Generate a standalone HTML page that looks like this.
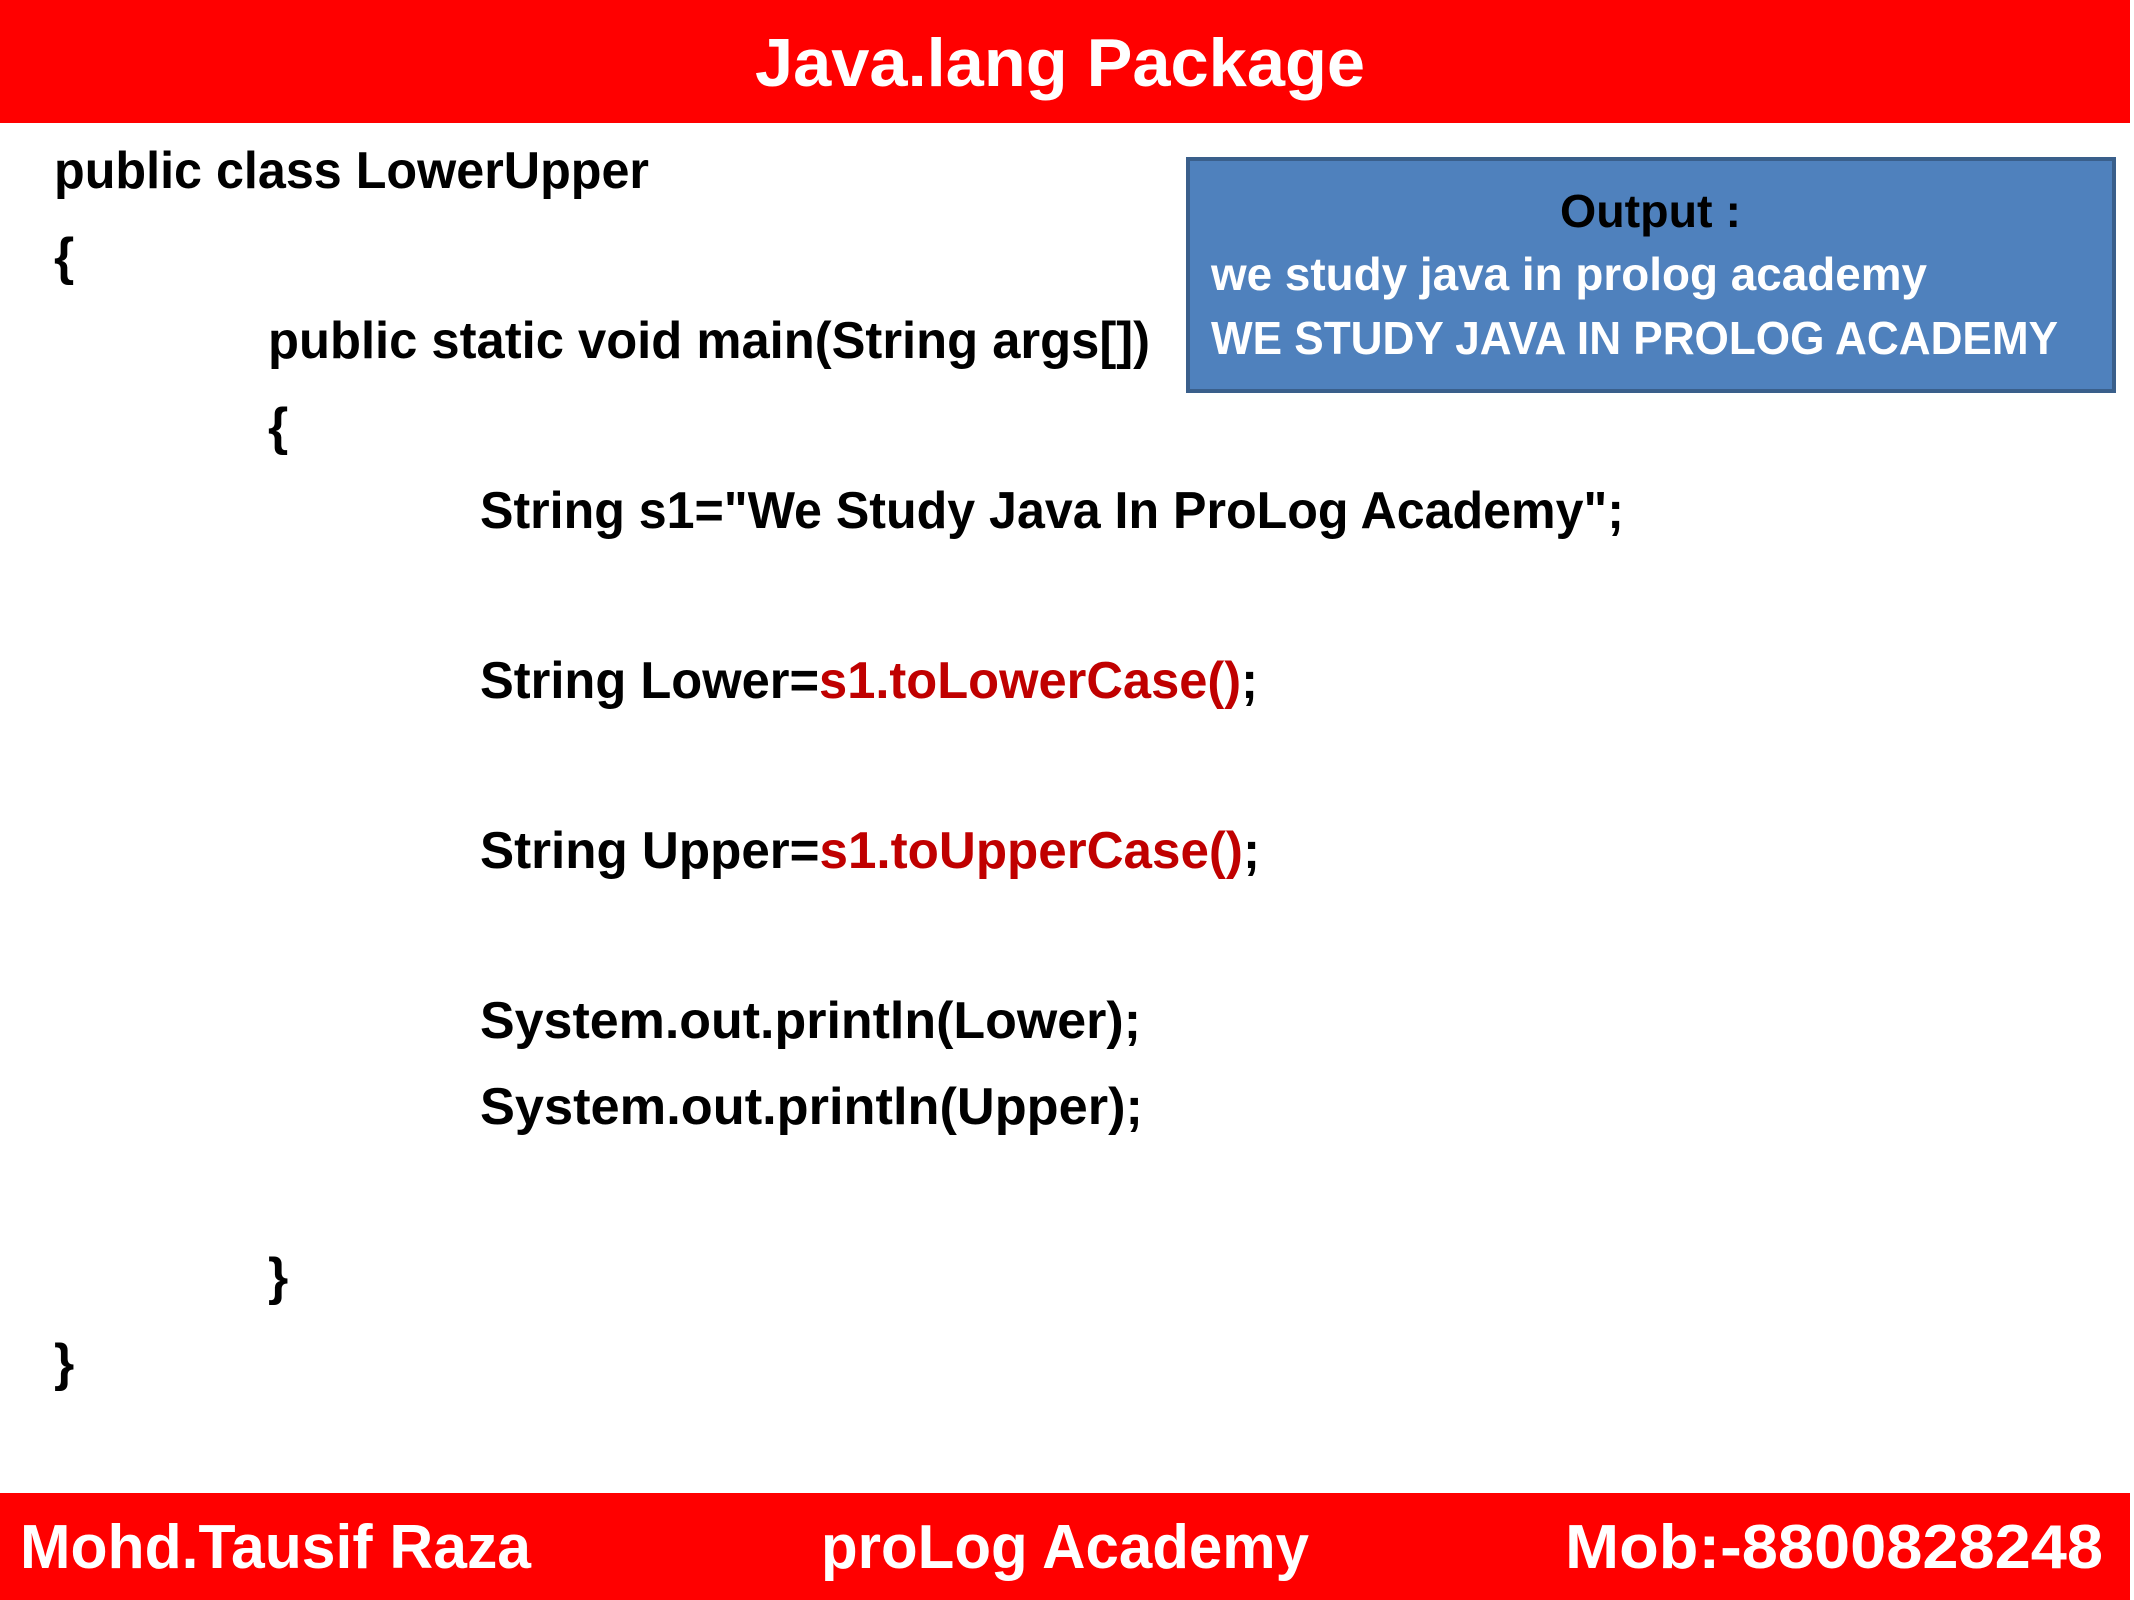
<!DOCTYPE html>
<html><head><meta charset="utf-8"><style>
html,body{margin:0;padding:0;background:#fff;width:2134px;height:1600px;overflow:hidden}
svg{display:block}
text{font-family:"Liberation Sans",sans-serif;font-weight:bold}
</style></head><body>
<svg width="2134" height="1600" viewBox="0 0 2134 1600" xmlns="http://www.w3.org/2000/svg">
<rect x="0" y="0" width="2130" height="123" fill="#ff0000"/>
<text x="755" y="86" font-size="68" fill="#fff" textLength="610" lengthAdjust="spacingAndGlyphs">Java.lang Package</text>

<rect x="1188" y="159" width="926" height="232" fill="#4f81bd" stroke="#3a5f8b" stroke-width="4"/>
<text x="1560" y="227" font-size="46" fill="#000" textLength="181" lengthAdjust="spacingAndGlyphs">Output :</text>
<text x="1211" y="290" font-size="46" fill="#fff" textLength="716" lengthAdjust="spacingAndGlyphs">we study java in prolog academy</text>
<text x="1211" y="354" font-size="46" fill="#fff" textLength="847" lengthAdjust="spacingAndGlyphs">WE STUDY JAVA IN PROLOG ACADEMY</text>

<g font-size="52" fill="#000">
<text x="54" y="188" textLength="595" lengthAdjust="spacingAndGlyphs">public class LowerUpper</text>
<text x="54" y="274">{</text>
<text x="268" y="358" textLength="882" lengthAdjust="spacingAndGlyphs">public static void main(String args[])</text>
<text x="268" y="444">{</text>
<text x="480" y="528" textLength="1144" lengthAdjust="spacingAndGlyphs">String s1="We Study Java In ProLog Academy";</text>
<text x="480" y="698" textLength="778" lengthAdjust="spacingAndGlyphs">String Lower=<tspan fill="#c00000">s1.toLowerCase()</tspan>;</text>
<text x="480" y="868" textLength="780" lengthAdjust="spacingAndGlyphs">String Upper=<tspan fill="#c00000">s1.toUpperCase()</tspan>;</text>
<text x="480" y="1038" textLength="661" lengthAdjust="spacingAndGlyphs">System.out.println(Lower);</text>
<text x="480" y="1124" textLength="663" lengthAdjust="spacingAndGlyphs">System.out.println(Upper);</text>
<text x="268" y="1294">}</text>
<text x="54" y="1380">}</text>
</g>

<rect x="0" y="1493" width="2130" height="107" fill="#ff0000"/>
<g font-size="62" fill="#fff">
<text x="20" y="1568" textLength="511" lengthAdjust="spacingAndGlyphs">Mohd.Tausif Raza</text>
<text x="821" y="1568" textLength="488" lengthAdjust="spacingAndGlyphs">proLog Academy</text>
<text x="1565" y="1568" textLength="538" lengthAdjust="spacingAndGlyphs">Mob:-8800828248</text>
</g>
</svg>
</body></html>
